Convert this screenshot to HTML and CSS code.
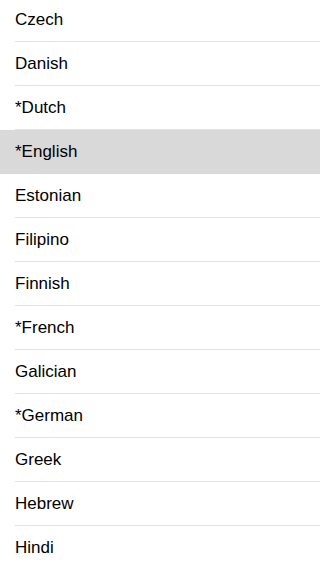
FILE: index.html
```html
<!DOCTYPE html>
<html>
<head>
<meta charset="utf-8">
<link rel="stylesheet" href="styles.css">
</head>
<body>
<ul class="list">
  <li class="row"><span class="label">Czech</span></li>
  <li class="row"><span class="label">Danish</span></li>
  <li class="row"><span class="label">*Dutch</span></li>
  <li class="row selected"><span class="label">*English</span></li>
  <li class="row"><span class="label">Estonian</span></li>
  <li class="row"><span class="label">Filipino</span></li>
  <li class="row"><span class="label">Finnish</span></li>
  <li class="row"><span class="label">*French</span></li>
  <li class="row"><span class="label">Galician</span></li>
  <li class="row"><span class="label">*German</span></li>
  <li class="row"><span class="label">Greek</span></li>
  <li class="row"><span class="label">Hebrew</span></li>
  <li class="row last"><span class="label">Hindi</span></li>
</ul>
</body>
</html>
```
FILE: styles.css
```css
html, body {
  margin: 0;
  padding: 0;
  background: #ffffff;
  overflow: hidden;
  height: 568px;
}
body {
  font-family: "Liberation Sans", Arial, sans-serif;
  color: #000000;
}
.list {
  list-style: none;
  margin: -2px 0 0 0;
  padding: 0;
}
.row {
  height: 44px;
  display: flex;
  align-items: center;
  padding-left: 15px;
  position: relative;
  box-sizing: border-box;
}
.row::after {
  content: "";
  position: absolute;
  left: 15px;
  right: 0;
  bottom: 0;
  height: 1px;
  background: #e3e3e5;
}
.row.selected {
  background: #d9d9d9;
}
.row.selected::after {
  background: #d9d9d9;
}
.row.last {
  height: 42px;
}
.row.last::after {
  display: none;
}
.label {
  font-size: 17px;
  line-height: 20px;
  padding-bottom: 1px;
}
.row.last .label {
  padding-bottom: 0;
  margin-top: 2px;
}
```
